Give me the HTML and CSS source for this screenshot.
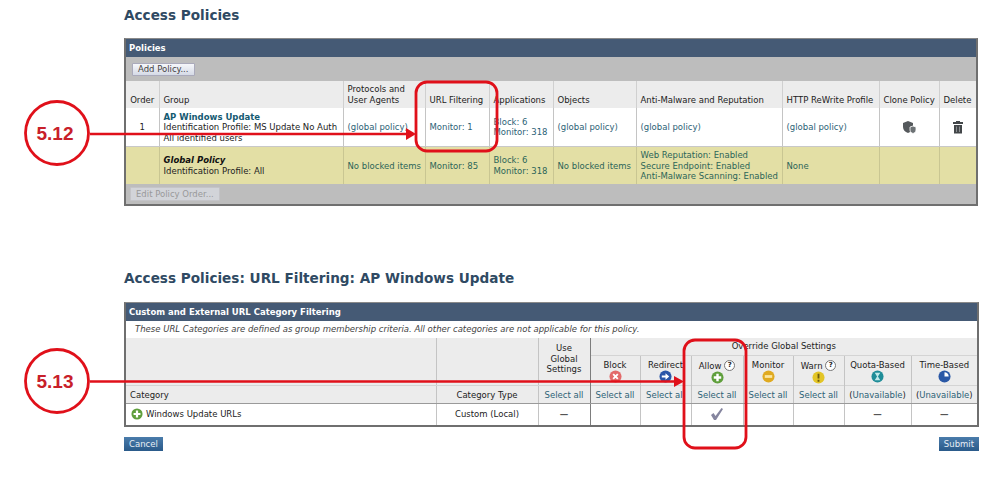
FILE: index.html
```html
<!DOCTYPE html>
<html lang="en">
<head>
  <meta charset="UTF-8">
  <title>Access Policies</title>
  <link rel="stylesheet" href="styles.css">
</head>
<body>

  <svg width="0" height="0" class="defs">
    <symbol id="ic-block" viewBox="0 0 14 14">
      <circle cx="7" cy="7" r="6.5" fill="#e36a6a"/>
      <path d="M4.5 4.5l5 5M9.5 4.5l-5 5" stroke="#fff" stroke-width="2"/>
    </symbol>
    <symbol id="ic-redirect" viewBox="0 0 14 14">
      <circle cx="7" cy="7" r="6.5" fill="#2b56a8"/>
      <path d="M3 6h4V3.5L11 7l-4 3.500V8H3z" fill="#fff"/>
    </symbol>
    <symbol id="ic-allow" viewBox="0 0 14 14">
      <circle cx="7" cy="7" r="6.5" fill="#5f9f3c"/>
      <path d="M7 3v8M3 7h8" stroke="#fff" stroke-width="2.600"/>
    </symbol>
    <symbol id="ic-monitor" viewBox="0 0 14 14">
      <circle cx="7" cy="7" r="6.500" fill="#e0aa20"/>
      <path d="M3 7h8" stroke="#fbe6a0" stroke-width="3"/>
    </symbol>
    <symbol id="ic-warn" viewBox="0 0 14 14">
      <circle cx="7" cy="7" r="6.500" fill="#e3c526"/>
      <path d="M7 3v5M7 9.500v2" stroke="#6b5a10" stroke-width="2"/>
    </symbol>
    <symbol id="ic-quota" viewBox="0 0 14 14">
      <circle cx="7" cy="7" r="6.500" fill="#1f8d98"/>
      <path d="M4 3h6L7.500 7 10 11H4l2.500-4z" fill="#bfeaea"/>
    </symbol>
    <symbol id="ic-time" viewBox="0 0 14 14">
      <circle cx="7" cy="7" r="6.500" fill="#2a58a6"/>
      <path d="M7 2.500V7h4.500A4.500 4.500 0 0 0 7 2.500z" fill="#fff"/>
    </symbol>
  </svg>

  <h1 class="title first">Access Policies</h1>

  <!-- Policies -->
  <div class="panel policies">
    <div class="panel-head">Policies</div>
    <div class="toolbar"><button class="btn">Add Policy...</button></div>
    <table>
      <colgroup>
        <col class="c-order"><col class="c-group"><col class="c-proto"><col class="c-url"><col class="c-apps">
        <col class="c-obj"><col class="c-anti"><col class="c-http"><col class="c-clone"><col class="c-del">
      </colgroup>
      <tr class="head-row">
        <th class="center">Order</th>
        <th>Group</th>
        <th>Protocols and<br>User Agents</th>
        <th>URL Filtering</th>
        <th>Applications</th>
        <th>Objects</th>
        <th>Anti-Malware and Reputation</th>
        <th>HTTP ReWrite Profile</th>
        <th>Clone Policy</th>
        <th>Delete</th>
      </tr>
      <tr class="policy-row">
        <td class="center plain">1</td>
        <td class="plain"><a class="name">AP Windows Update</a><br>Identification Profile: MS Update No Auth<br>All identified users</td>
        <td><a>(global policy)</a></td>
        <td><a>Monitor: 1</a></td>
        <td><a>Block: 6<br>Monitor: 318</a></td>
        <td><a>(global policy)</a></td>
        <td><a>(global policy)</a></td>
        <td><a>(global policy)</a></td>
        <td class="center">
          <svg class="tool-icon" viewBox="0 0 14 14"><path d="M1 3l5-2 5 2v4c0 3-2 5-5 6-3-1-5-3-5-6z" fill="#55595c"/><path d="M8 7l3-1 3 1v3c0 2-1.500 3-3 3.500C9.500 13 8 12 8 10z" fill="#6d7275" stroke="#fff" stroke-width=".8"/></svg>
        </td>
        <td class="center">
          <svg class="tool-icon" viewBox="0 0 14 14"><path d="M5 1h4v1h3v2H2V2h3z" fill="#43474a"/><path d="M3 5h8v8.500H3z" fill="#43474a"/><path d="M5.500 6.500v5.500M8.500 6.500v5.500" stroke="#8a8e90"/></svg>
        </td>
      </tr>
      <tr class="global-row">
        <td></td>
        <td class="plain"><b class="global-name">Global Policy</b><br>Identification Profile: All</td>
        <td>No blocked items</td>
        <td>Monitor: 85</td>
        <td>Block: 6<br>Monitor: 318</td>
        <td>No blocked items</td>
        <td>Web Reputation: Enabled<br>Secure Endpoint: Enabled<br>Anti-Malware Scanning: Enabled</td>
        <td>None</td>
        <td></td>
        <td></td>
      </tr>
    </table>
    <div class="toolbar foot"><button class="btn disabled">Edit Policy Order...</button></div>
  </div>

  <h1 class="title second">Access Policies: URL Filtering: AP Windows Update</h1>

  <!-- URL categories -->
  <div class="panel filtering">
    <div class="panel-head">Custom and External URL Category Filtering</div>
    <div class="note">These URL Categories are defined as group membership criteria. All other categories are not applicable for this policy.</div>
    <table>
      <colgroup>
        <col class="f-cat"><col class="f-type"><col class="f-global"><col class="f-block"><col class="f-redirect">
        <col class="f-allow"><col class="f-monitor"><col class="f-warn"><col class="f-quota"><col class="f-time">
      </colgroup>
      <tr class="over-row">
        <th rowspan="2"></th>
        <th rowspan="2"></th>
        <th rowspan="2" class="center sep">Use<br>Global<br>Settings</th>
        <th colspan="7" class="center">Override Global Settings</th>
      </tr>
      <tr class="action-row">
        <th class="center">Block<svg class="act"><use href="#ic-block"/></svg></th>
        <th class="center">Redirect<svg class="act"><use href="#ic-redirect"/></svg></th>
        <th class="center">Allow <span class="help">?</span><svg class="act"><use href="#ic-allow"/></svg></th>
        <th class="center">Monitor<svg class="act"><use href="#ic-monitor"/></svg></th>
        <th class="center">Warn <span class="help">?</span><svg class="act"><use href="#ic-warn"/></svg></th>
        <th class="center">Quota-Based<svg class="act"><use href="#ic-quota"/></svg></th>
        <th class="center">Time-Based<svg class="act"><use href="#ic-time"/></svg></th>
      </tr>
      <tr class="select-row">
        <th>Category</th>
        <th class="center">Category Type</th>
        <th class="center sep"><a>Select all</a></th>
        <th class="center"><a>Select all</a></th>
        <th class="center"><a>Select all</a></th>
        <th class="center"><a>Select all</a></th>
        <th class="center"><a>Select all</a></th>
        <th class="center"><a>Select all</a></th>
        <th class="center">(<a>Unavailable</a>)</th>
        <th class="center">(<a>Unavailable</a>)</th>
      </tr>
      <tr class="data-row">
        <td class="plain"><svg class="cat-icon"><use href="#ic-allow"/></svg>Windows Update URLs</td>
        <td class="center plain">Custom (Local)</td>
        <td class="center plain sep dash">&mdash;</td>
        <td></td>
        <td></td>
        <td class="center">
          <svg class="check" viewBox="0 0 14 14"><path d="M1 8l2.500-2 2 3L11.500 1 13 2 6 13H4z" fill="#85859f"/></svg>
        </td>
        <td></td>
        <td></td>
        <td class="center plain dash">&mdash;</td>
        <td class="center plain dash">&mdash;</td>
      </tr>
    </table>
  </div>

  <div class="actions">
    <button class="btn-blue">Cancel</button>
    <button class="btn-blue">Submit</button>
  </div>

  <!-- Red callouts on top of the screens -->
  <svg class="callouts" width="999" height="480">
    <circle cx="57" cy="133" r="31.500"/>
    <path d="M90 134H408"/>
    <path class="head" d="M406 128l10 6-10 6z"/>
    <rect x="416" y="82" width="81" height="69" rx="11"/>
    <text x="55" y="140">5.12</text>

    <circle cx="57" cy="381" r="31.500"/>
    <path d="M90 381.500H676"/>
    <path class="head" d="M674 376l10 5.500-10 5.500z"/>
    <rect x="684" y="340" width="62" height="108" rx="11"/>
    <text x="55" y="388">5.13</text>
  </svg>

</body>
</html>
```

FILE: styles.css
```css
body {
  font-family: "DejaVu Sans", Verdana, sans-serif;
  font-size: 8.500px;
  color: #222;
  background: white;
  margin: 0;
  padding: 0 20px 0 124px;
  position: relative;
  height: 480px;
  box-sizing: border-box;
  overflow: hidden;
}

.defs {
  position: absolute;
}

.title {
  font-size: 13.600px;
  line-height: 16px;
  color: #2f4a63;
  margin: 0;
}

.title.first {
  padding-top: 7px;
}

.title.second {
  padding-top: 64px;
}

.panel {
  border: 2px solid #6f6f6f;
  border-top-color: #8a8a8a;
  border-top-width: 1px;
  box-sizing: border-box;
}

.policies {
  width: 854px;
  margin-top: 15px;
}

.filtering {
  width: 855px;
  margin-top: 16px;
}

.panel-head {
  background: #455a75;
  color: white;
  font-weight: bold;
  height: 18px;
  line-height: 18px;
  padding-left: 3px;
}

.toolbar {
  background: #bdbdbd;
  height: 24px;
  display: flex;
  align-items: center;
  padding-left: 6px;
}

.toolbar.foot {
  height: 20px;
  padding-left: 4px;
}

.btn {
  font: inherit;
  color: #444;
  height: 13px;
  line-height: 11px;
  padding: 0 5px;
  background: linear-gradient(#f6f7fa, #d5dae6);
  border: 1px solid #aab;
  border-radius: 1px;
}

.btn.disabled {
  color: #999;
  height: 14px;
  background: #d2d4d9;
  border-color: #c4c4c8;
}

table {
  border-collapse: collapse;
  table-layout: fixed;
  width: 100%;
}

th, td {
  box-sizing: border-box;
  padding: 0 4px;
  border-right: 1px solid #c4c4c4;
  font-weight: normal;
  text-align: left;
  overflow: hidden;
  white-space: nowrap;
}

tr > :last-child {
  border-right: none;
}

th {
  background: #ececec;
  vertical-align: bottom;
  padding-bottom: 3px;
  line-height: 10.500px;
}

td {
  color: #2c6276;
  vertical-align: middle;
  line-height: 10.500px;
}

.center {
  text-align: center;
}

.plain {
  color: #222;
}

a {
  color: #2c6276;
}

/* policies table */
.c-order { width: 33px; }
.c-group { width: 184px; }
.c-proto { width: 82px; }
.c-url { width: 64px; }
.c-apps { width: 64px; }
.c-obj { width: 83px; }
.c-anti { width: 146px; }
.c-http { width: 97px; }
.c-clone { width: 60px; }
.c-del { width: 37px; }

.head-row th {
  height: 27px;
  border-right-color: #d0d0d0;
}

.policy-row td {
  height: 38px;
  padding-top: 1px;
  border-bottom: 1px solid #c8c8c8;
}

.global-row td {
  height: 38px;
  padding-top: 1px;
  background: #e3dfa5;
  color: #2c6558;
  border-right-color: #c9c692;
}

.global-row .plain {
  color: #222;
}

.name {
  font-weight: bold;
  color: #155a72;
}

.global-name {
  font-style: italic;
  color: #111;
}

.tool-icon {
  width: 14px;
  height: 14px;
  display: block;
  margin: 0 auto;
}

/* filtering table */
.note {
  height: 17px;
  line-height: 17px;
  padding-left: 9px;
  font-style: italic;
  color: #444;
  background: white;
}

.f-cat { width: 310px; }
.f-type { width: 102px; }
.f-global { width: 52px; }
.f-block { width: 50px; }
.f-redirect { width: 51px; }
.f-allow { width: 52px; }
.f-monitor { width: 50px; }
.f-warn { width: 51px; }
.f-quota { width: 67px; }
.f-time { width: 66px; }

.over-row th {
  height: 17px;
  border-bottom: 1px solid #d4d4d4;
}

.over-row th.sep {
  vertical-align: top;
  padding-top: 5px;
  padding-bottom: 0;
  border-bottom: none;
}

.action-row th {
  height: 30px;
  vertical-align: top;
  padding-top: 4px;
  padding-bottom: 0;
}

.select-row th {
  height: 18px;
  padding-bottom: 2px;
  vertical-align: bottom;
  border-top: 1px solid #d4d4d4;
  border-bottom: 1px solid #9a9a9a;
}

.filtering .sep {
  border-right: 1px solid #7d7d7d;
}

.data-row td {
  height: 22px;
}

.dash {
  color: #555;
  font-weight: bold;
}

.act {
  display: block;
  width: 13px;
  height: 13px;
  margin: 0 auto;
}

.help {
  display: inline-block;
  width: 9px;
  height: 9px;
  line-height: 9px;
  border: 1px solid #777;
  border-radius: 50%;
  background: white;
  font-size: 7px;
  font-weight: bold;
  text-align: center;
  vertical-align: 2px;
}

.cat-icon {
  width: 12px;
  height: 12px;
  vertical-align: -3px;
  margin: 0 3px 0 1px;
}

.check {
  width: 14px;
  height: 14px;
  display: block;
  margin: 0 auto;
}

.actions {
  width: 855px;
  display: flex;
  justify-content: space-between;
  margin-top: 10px;
}

.btn-blue {
  font: inherit;
  color: #e8eef5;
  height: 14px;
  padding: 0 5px;
  background: linear-gradient(#4a7cab, #2a5a8a);
  border: none;
}

/* callouts */
.callouts {
  position: absolute;
  left: 0;
  top: 0;
}

.callouts circle, .callouts rect, .callouts path {
  fill: none;
  stroke: #e0101a;
  stroke-width: 2.500;
}

.callouts circle, .callouts rect {
  stroke-width: 2.800;
}

.callouts .head {
  fill: #e0101a;
  stroke: none;
}

.callouts text {
  font-family: "Liberation Sans", Arial, sans-serif;
  font-size: 19px;
  font-weight: bold;
  fill: #c8202a;
  text-anchor: middle;
}
```
